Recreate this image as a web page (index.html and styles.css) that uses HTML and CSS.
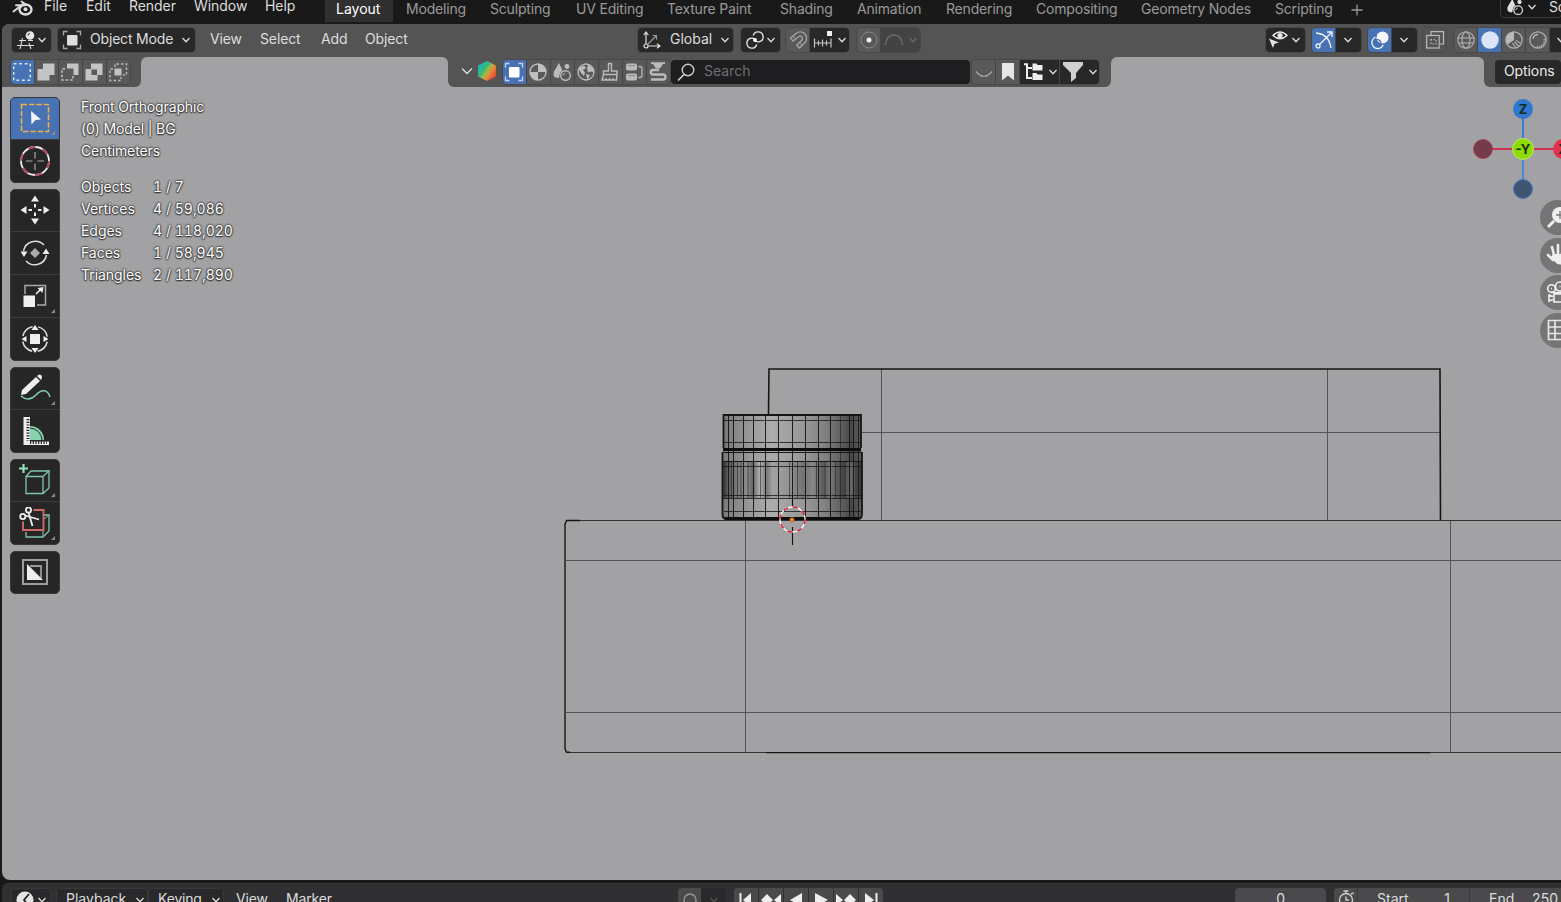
FILE: index.html
```html
<!DOCTYPE html>
<html lang="en">
<head>
<meta charset="utf-8">
<title>Blender</title>
<link rel="stylesheet" href="styles.css">
</head>
<body>
<svg class="defs" aria-hidden="true">
  <symbol id="chev" viewBox="0 0 8 6"><path d="M.5 1 4 4.800 7.500 1" fill="none" stroke="currentColor" stroke-width="1.300"/></symbol>
  <symbol id="scene" viewBox="0 0 20 20"><path d="M7 1 2 9.500Q0 15.500 6 16Q7.500 16 7.500 13Q8 9.500 10.500 8.500Z" fill="currentColor"/><circle cx="15" cy="4.500" r="2.400" fill="currentColor"/><circle cx="13.500" cy="13.500" r="4.800" fill="none" stroke="currentColor" stroke-width="1.400"/><path d="M11 13.500a2.500 2.500 0 0 1 2-2.300" fill="none" stroke="currentColor"/></symbol>
  <symbol id="objmode" viewBox="0 0 20 20"><path d="M1.500 5.500v-4h4M14.500 1.500h4v4M18.500 14.500v4h-4M5.500 18.500h-4v-4" fill="none" stroke="currentColor" opacity=".7" stroke-width="1.300"/><rect x="5" y="5" width="10.500" height="10.500" rx="1" fill="currentColor"/></symbol>
  <symbol id="corner" viewBox="0 0 4 4"><path d="M4 0v4H0z" fill="#8c8c8c"/></symbol>
</svg>

<header class="topbar">
  <svg class="logo" viewBox="0 0 22 17"><path d="M1.500 11.500 11 4M4 5.300h9M9.500 1.500l5 3.500" fill="none" stroke="#ddd" stroke-width="2" stroke-linecap="round"/><ellipse cx="13.500" cy="9.500" rx="6" ry="5" fill="none" stroke="#ddd" stroke-width="2.400"/><circle cx="13.500" cy="9.300" r="2" fill="#ddd"/></svg>
  <nav class="menus"><span>File</span><span>Edit</span><span>Render</span><span>Window</span><span>Help</span></nav>
  <nav class="tabs"><span class="tab on">Layout</span><span>Modeling</span><span>Sculpting</span><span>UV Editing</span><span>Texture Paint</span><span>Shading</span><span>Animation</span><span>Rendering</span><span>Compositing</span><span>Geometry Nodes</span><span>Scripting</span>
    <svg class="plus" viewBox="0 0 12 12"><path d="M6 .5v11M.5 6h11" stroke="#999" stroke-width="1.300"/></svg></nav>
  <div class="scenebox"><svg class="i18"><use href="#scene"/></svg><svg class="chev"><use href="#chev"/></svg><span>Scene</span></div>
</header>

<main class="viewport">
  <svg class="canvas" viewBox="2 24 1559 856">
    <defs>
      <linearGradient id="cap"><stop offset="0" stop-color="#777"/><stop offset=".2" stop-color="#999"/><stop offset=".35" stop-color="#acacac"/><stop offset=".6" stop-color="#969696"/><stop offset=".75" stop-color="#7e7e7e"/><stop offset=".93" stop-color="#484848"/><stop offset="1" stop-color="#5c5c5c"/></linearGradient>
      <linearGradient id="ribs"><stop offset="0" stop-color="#444"/><stop offset=".1" stop-color="#777"/><stop offset=".18" stop-color="#8a8a8a"/><stop offset=".22" stop-color="#666"/><stop offset=".27" stop-color="#b0b0b0"/><stop offset=".32" stop-color="#787878"/><stop offset=".36" stop-color="#a2a2a2"/><stop offset=".48" stop-color="#929292"/><stop offset=".58" stop-color="#737373"/><stop offset=".65" stop-color="#888"/><stop offset=".72" stop-color="#5c5c5c"/><stop offset=".78" stop-color="#777"/><stop offset=".86" stop-color="#454545"/><stop offset=".92" stop-color="#686868"/><stop offset="1" stop-color="#333"/></linearGradient>
    </defs>
    <g fill="none" stroke="#555558">
      <path d="M881.500 369.500V520M1327.500 369.500V520M862 432.500h578"/>
      <path d="M745.500 520V752M1450.500 520V752M566 560.500h995M566 712.500h995"/>
      <path d="M566 520.500h995M566 752.500h995" stroke="#333"/>
    </g>
    <g fill="none" stroke="#161616">
      <path d="M768.500 415l.5-46h671l.5 151" stroke-width="1.600"/>
      <path d="M580 520.500h-13.500l-1.500 4v224l1.500 3.800H570M766 752.600h664" stroke-width="1.400"/>
    </g>
    <rect x="723" y="415" width="138" height="35" fill="url(#cap)"/>
    <path d="M723.500 450h137.500l1 3v63q0 4-4 4H726q-4 0-4-4v-63z" fill="url(#cap)"/>
    <rect x="722" y="461" width="140" height="37" fill="url(#ribs)"/>
    <g fill="none" stroke="#161616">
      <path d="M728.500 415v102M733.500 415v103M743.500 415v103M753.500 415v103M765.500 415v103M778.500 415v103M792.500 415v93M805.500 415v103M818.500 415v103M830.500 415v103M849.500 415v103M853.500 415v103M858.500 415v102" stroke-width=".95"/>
      <path d="M840.500 415v103M725 462v36M731.500 462v36M737.500 462v36M741 462v36M748 462v36M760.500 462v36M789.500 462v36M797.500 462v36M816.500 462v36M825 462v36M835.500 462v36M845 462v36M856 462v36" stroke-width=".75" opacity=".7"/>
      <path d="M723 420.500h138M723 442.500h138M722 466.500h140M722 495.500h140M722 498.500h140M724 511.500h137" stroke-width=".8"/>
      <path d="M722 461.500h140M723.500 452.500h138" stroke-width="1.200"/>
      <path d="M723.500 448v-33h137.500v33M722.500 452v62q0 5 4 5h131q4.500 0 4.500-5v-62" stroke-width="1.800"/>
      <path d="M723 449.500h138" stroke="#0c0c0c" stroke-width="2.800"/>
      <path d="M725 518.500h134" stroke="#0c0c0c" stroke-width="2.800"/>
    </g>
    <path d="M792.500 496v12M792.500 527v18" stroke="#111" stroke-width="1.100"/>
    <circle cx="792.500" cy="519.500" r="12.500" fill="none" stroke="#fff" stroke-width="1.300"/>
    <circle cx="792.500" cy="519.500" r="12.500" fill="none" stroke="#e01b2e" stroke-width="1.400" stroke-dasharray="4.910 4.910"/>
    <circle cx="792" cy="519.800" r="2.300" fill="#f58220" stroke="#8a4a12" stroke-width=".4"/>
  </svg>

  <div class="row1">
    <div class="w editor"><svg class="i20" viewBox="0 0 20 20"><g fill="none" stroke="#ddd" stroke-width="1.100"><path d="M3 10.500h7M1 15.500h17M6.500 8 4 19M13 13l2 6M12 10.500h5"/></g><circle cx="14" cy="5.500" r="4.300" fill="#e6e6e6"/><path d="M12 5.500a2 2 0 0 1 2-2" stroke="#333" fill="none"/></svg><svg class="chev"><use href="#chev"/></svg></div>
    <div class="w mode"><svg class="i20"><use href="#objmode"/></svg><span>Object Mode</span><svg class="chev"><use href="#chev"/></svg></div>
    <nav class="vmenus"><span>View</span><span>Select</span><span>Add</span><span>Object</span></nav>
    <div class="mid">
      <div class="w orient"><svg class="i20" viewBox="0 0 20 20"><g fill="none" stroke="#e0e0e0" stroke-width="1.200"><path d="M4 14V2.500M1.700 5 4 2l2.300 3M6 16h11.500M15 13.700l3 2.300-3 2.300"/><circle cx="4" cy="16" r="2"/><path d="M5.500 14.500 14 6M10.500 5.500H14.500v4" stroke="#999"/></g></svg><span>Global</span><svg class="chev"><use href="#chev"/></svg></div>
      <div class="w pivot"><svg class="i20" viewBox="0 0 20 20"><g fill="none" stroke="#e0e0e0" stroke-width="1.400"><path d="M8.300 5.500A5 5 0 1 1 14 11.800"/><path d="M11.700 14.500A5 5 0 1 1 6 8.200M14 11.800q-3.500.3-5-2M6 8.200q3.500-.3 5 2"/></g><circle cx="10" cy="10" r="1.900" fill="#fff"/></svg><svg class="chev"><use href="#chev"/></svg></div>
      <div class="pair"><div class="b"><svg class="i20" viewBox="0 0 20 20"><path d="M2.500 8 8 3.500a6.300 6.300 0 0 1 8.500 9.500l-5 5-2.800-2.800 5-5a2.300 2.300 0 0 0-3.200-3.500L5 11z" fill="none" stroke="#a5a5a5" stroke-width="1.300"/><path d="m5 6 2.300 2.800M11.700 12.500l2.700 2.600" stroke="#a5a5a5"/></svg></div><div class="dk"><svg class="i20" viewBox="0 0 20 20"><path d="M1.500 8.500v9M18 8.500v9M1.500 13H18M5.500 10.500v5M9.500 9.500v7M13.500 10.500v5" stroke="#c5c5c5" fill="none" stroke-width="1.200"/><rect x="14" y="1" width="5" height="5" fill="#eee"/></svg><svg class="chev"><use href="#chev"/></svg></div></div>
      <div class="pair prop"><div class="b"><svg class="i20" viewBox="0 0 20 20"><circle cx="10" cy="10" r="8" fill="none" stroke="#858585"/><circle cx="10" cy="10" r="2.500" fill="#eee"/></svg></div><div class="dk off"><svg class="i20" viewBox="0 0 20 20"><path d="M1.500 15C2 1.500 18 1.500 18.500 15" fill="none" stroke="#777" stroke-width="1.200"/></svg><svg class="chev"><use href="#chev"/></svg></div></div>
    </div>
    <div class="right">
      <div class="w eye"><svg class="i20" viewBox="0 0 20 20"><path d="M5 5.500Q12 -1.500 19 5.500 12 12 5 5.500z" fill="none" stroke="#e5e5e5" stroke-width="1.500"/><circle cx="12" cy="5.500" r="2.600" fill="#e5e5e5"/><path d="m1 8.500 10 4-4.500 1.200L5 18z" fill="#e5e5e5"/></svg><svg class="chev"><use href="#chev"/></svg></div>
      <div class="pair giz"><div class="b blue"><svg class="i20" viewBox="0 0 20 20"><path d="M2 3q13 1 15 15M5.500 14.500l12-12M13 2h5v5" fill="none" stroke="#f2f5fb" stroke-width="1.300"/><circle cx="4" cy="16" r="2" fill="none" stroke="#f2f5fb" stroke-width="1.300"/></svg></div><div class="dk one"><svg class="chev"><use href="#chev"/></svg></div></div>
      <div class="pair ovl"><div class="b blue"><svg class="i20" viewBox="0 0 20 20"><circle cx="12.500" cy="7.500" r="6" fill="#f5f7fc"/><path d="M5.500 7a6 6 0 1 0 7.800 8" fill="none" stroke="#f5f7fc" stroke-width="1.300"/><path d="M6.700 9.500a4 4 0 0 1 4.300 4" fill="none" stroke="#4772b3" stroke-width="1.200"/></svg></div><div class="dk one"><svg class="chev"><use href="#chev"/></svg></div></div>
      <div class="b solo"><svg class="i20" viewBox="0 0 20 20"><g fill="none" stroke="#bbb" stroke-width="1.200"><path d="M6 5V1.700h12.500V14H15"/><rect x="1.700" y="5.500" width="12.500" height="12.500"/><path d="M6 9.500v4.500h5V9.500z" stroke-dasharray="1.500 1.500"/></g></svg></div>
      <div class="pair shade">
        <div class="b"><svg class="i20" viewBox="0 0 20 20"><g fill="none" stroke="#b5b5b5" stroke-width="1.100"><circle cx="10" cy="10" r="8.200"/><ellipse cx="10" cy="10" rx="4" ry="8"/><path d="M2 8h16M2.800 13h14.400"/></g></svg></div>
        <div class="b blue"><svg class="i20" viewBox="0 0 20 20"><circle cx="10" cy="10" r="8.700" fill="#dce5f5"/></svg></div>
        <div class="b"><svg class="i20" viewBox="0 0 20 20"><circle cx="10" cy="10" r="8.200" fill="none" stroke="#b0b0b0" stroke-width="1.200"/><path d="M10 10V2a8 8 0 0 0-8 8z M2 10a8 8 0 0 0 1.500 4.500L10 10z" fill="#b8b8b8"/><path d="M12 10.500l5 3M10.500 12l4.500 4.500M8.500 13l3.500 5" stroke="#aaa" stroke-width="1.300"/></svg></div>
        <div class="b"><svg class="i20" viewBox="0 0 20 20"><circle cx="10" cy="10" r="8.200" fill="none" stroke="#b0b0b0" stroke-width="1.200"/><path d="M5 9a5 5 0 0 1 5-4.500" fill="none" stroke="#bbb" stroke-width="1.400"/><path d="M16.500 9a6.500 6.500 0 0 1-8 7.700" fill="none" stroke="#aaa" stroke-width="2.400" stroke-dasharray="1.300 1"/></svg></div>
        <div class="dk one last"><svg class="chev"><use href="#chev"/></svg></div>
      </div>
    </div>
  </div>

  <div class="row2">
    <div class="seg s1"><div class="pair">
      <div class="b blue"><svg class="i20" viewBox="0 0 20 20"><rect x="1.700" y="1.700" width="16.600" height="16.600" fill="none" stroke="#dfe8f7" stroke-width="1.500" stroke-dasharray="2.770"/></svg></div>
      <div class="b"><svg class="i20" viewBox="0 0 20 20"><path d="M7 1.500h11.500V13H13.500v5.500H1.500V7H7z" fill="#c4c4c4"/></svg></div>
      <div class="b"><svg class="i20" viewBox="0 0 20 20"><path d="M7 1.500h11.500V13H13.500V6.500H7z" fill="#c4c4c4"/><path d="M5 6.700H2v11.300h11V14" fill="none" stroke="#c4c4c4" stroke-width="1.500" stroke-dasharray="2.500 2"/></svg></div>
      <div class="b"><svg class="i20" viewBox="0 0 20 20"><path fill-rule="evenodd" d="M7 1.500h11.500V13H13.500v5.500H1.500V7H7zM7.500 7.500v5.500H13V7.500z" fill="#c4c4c4"/></svg></div>
      <div class="b"><svg class="i20" viewBox="0 0 20 20"><path d="M7 5V2h11.500v11H15M5 7H2v11.500h11V15" fill="none" stroke="#bbb" stroke-width="1.400" stroke-dasharray="2.500 2"/><rect x="6.500" y="6.500" width="7" height="7" fill="#c4c4c4"/></svg></div>
    </div></div>
    <div class="gap g1"></div>
    <div class="seg s2">
      <svg class="c2" viewBox="0 0 12 8"><path d="m1 1.500 5 5 5-5" fill="none" stroke="#ddd" stroke-width="1.300"/></svg>
      <div class="hex"></div>
      <div class="pair filt">
        <div class="b blue"><svg class="i20"><use href="#objmode"/></svg></div>
        <div class="b"><svg class="i20" viewBox="0 0 20 20"><circle cx="10" cy="10" r="8" fill="none" stroke="#bbb" stroke-width="1.400"/><path d="M10 10V2a8 8 0 0 1 8 8zM10 10H2a8 8 0 0 0 8 8z" fill="#c0c0c0"/></svg></div>
        <div class="b"><svg class="i20"><use href="#scene"/></svg></div>
        <div class="b"><svg class="i20" viewBox="0 0 20 20"><circle cx="10" cy="10" r="8" fill="none" stroke="#bbb" stroke-width="1.300"/><path d="M2.500 7q2-3.500 6-3l1.500 2-3 2 2 2.500-1 3.500-3-3zM12 2.500l4.500 3 1.500 5-3-1-3 1-1-4zM10 12l4 1-2.500 5z" fill="#bbb"/></svg></div>
        <div class="b"><svg class="i20" viewBox="0 0 20 20"><path d="M8.500 1.500h3V9H17v3.500H3.500V9h5zM3.500 12.500 2 18h14.500l.5-5.500M6 18v-2M9.500 18v-2M13 18v-2" fill="none" stroke="#bbb" stroke-width="1.400"/></svg></div>
        <div class="b"><svg class="i20" viewBox="0 0 20 20"><rect x="2" y="1.500" width="11" height="7" rx="2" fill="#bbb"/><rect x="2" y="11.500" width="11" height="7" rx="2" fill="#bbb"/><path d="M4 3.700h7M4 13.700h7" stroke="#888"/><path d="M14.500 4.500h1.500q2 0 2 2v7q0 2-2 2h-1.500" fill="none" stroke="#bbb" stroke-width="1.300"/></svg></div>
        <div class="b"><svg class="i20" viewBox="0 0 20 20"><path d="M3 1.200h14" stroke="#bbb" stroke-width="1.800"/><path d="M5 2h10l-3 4.500H8z" fill="#bbb"/><path d="M11 8H5a2 2 0 0 0 0 4.500h10a2.500 2.500 0 0 1 0 5H3" fill="none" stroke="#bbb" stroke-width="2.300"/></svg></div>
      </div>
      <div class="search"><svg class="i20" viewBox="0 0 20 20"><circle cx="12" cy="8" r="5.800" fill="none" stroke="#ccc" stroke-width="1.400"/><path d="m8 12.500-6 6" stroke="#ccc" stroke-width="1.700"/></svg><span>Search</span></div>
      <div class="pair tail">
        <div class="b"><svg class="i20" viewBox="0 0 20 20"><path d="M2 9.500q8 9.500 16 0" fill="none" stroke="#aaa" stroke-width="1.200"/></svg></div>
        <div class="b"><svg class="i20" viewBox="0 0 20 20"><path d="M4 1h12v17.500l-6-5-6 5z" fill="#e6e6e6"/></svg></div>
        <div class="dk"><svg class="i20" viewBox="0 0 20 20"><path d="M1 2.200h3V16h5M4 6h5" fill="none" stroke="#eee" stroke-width="2"/><path d="M9.500 1.500h4l1 1.500h5v5.500h-10zM9.500 11h4l1 1.500h5V18h-10z" fill="#eee"/></svg><svg class="chev"><use href="#chev"/></svg></div>
        <div class="dk"><svg class="i20" viewBox="0 0 20 20"><path d="M0 0h20v3l-7 8v5l-5 4v-9L0 3z" fill="#d0d0d0"/></svg><svg class="chev"><use href="#chev"/></svg></div>
      </div>
    </div>
    <div class="gap g2"></div>
    <div class="seg s3"><div class="w options">Options</div></div>
  </div>

  <div class="stage">
    <aside class="tools">
      <div class="grp">
        <div class="tool on"><svg viewBox="0 0 32 32"><rect x="2.500" y="2.500" width="27" height="27" fill="none" stroke="#f0b04a" stroke-width="1.600" stroke-dasharray="5.500 1.900"/><path d="m12 9 10 8.500-5.500.5-4 4.500z" fill="#f2f5fb"/></svg><svg class="cr"><use href="#corner"/></svg></div>
        <div class="tool"><svg viewBox="0 0 32 32"><circle cx="16" cy="16" r="14" fill="none" stroke="#eee" stroke-width="1.800"/><circle cx="16" cy="16" r="14" fill="none" stroke="#b04a5e" stroke-width="1.900" stroke-dasharray="7.330"/><path d="M16 7v6.500M16 18.500V25M7 16h6.500M18.500 16H25" stroke="#aaa" stroke-width="1.200"/></svg></div>
      </div>
      <div class="grp">
        <div class="tool"><svg viewBox="0 0 32 32"><path d="m16 1.500 4 6h-8zM16 30.500l4-6h-8zM1.500 16l6-4v8zM30.500 16l-6-4v8z" fill="#eee"/><path d="M16 10v3.500M16 18.500V22M9.500 16H13M19 16h3.500" stroke="#eee" stroke-width="2"/></svg></div>
        <div class="tool"><svg viewBox="0 0 32 32"><path d="M4.500 14A12 12 0 0 1 25 8M27.500 18A12 12 0 0 1 7 24" fill="none" stroke="#ddd" stroke-width="1.500"/><path d="M1.500 14.500h7L5 20zM23.500 17h7L27 11.500z" fill="#eee"/><path d="m16 11 5 5-5 5-5-5z" fill="#aaa"/></svg></div>
        <div class="tool"><svg viewBox="0 0 32 32"><path d="M6 14V5.500h20.500V25H18" fill="none" stroke="#aaa" stroke-width="1.500"/><rect x="4.500" y="15.500" width="11.500" height="11.500" fill="#eee"/><path d="m17 14 5-5" stroke="#eee" stroke-width="1.600"/><path d="m18.500 8 6-1-1 6z" fill="#eee"/></svg><svg class="cr"><use href="#corner"/></svg></div>
        <div class="tool"><svg viewBox="0 0 32 32"><circle cx="16" cy="16" r="12.500" fill="none" stroke="#ddd" stroke-width="1.500" stroke-dasharray="14 5.635" stroke-dashoffset="-2.800"/><rect x="11" y="11" width="10" height="10" fill="#eee"/><path d="m16 2 3.500 5h-7zM16 30l3.500-5h-7zM2.500 16l5-3v6zM29.500 16l-5-3v6z" fill="#eee"/></svg></div>
      </div>
      <div class="grp">
        <div class="tool"><svg viewBox="0 0 32 32"><path d="M2 24c7 6 12 2 15-1 6-7 12-5 14 2" fill="none" stroke="#7fd0ae" stroke-width="1.500"/><path d="m2 23 1-5L17 5l4 4L7 22zM18 4l2-1.500q3 0 3 3L22 8z" fill="#eee"/></svg><svg class="cr"><use href="#corner"/></svg></div>
        <div class="tool"><svg viewBox="0 0 32 32"><path d="M11 25V11a14 14 0 0 1 14 14z" fill="#86d3af"/><path d="M11 13a12.500 12.500 0 0 1 12 12" fill="none" stroke="#262626"/><path d="M5 2h6v24.500h19V30H4.500V2z" fill="#eee"/><path d="M9 4v22" stroke="#262626" stroke-width="3" stroke-dasharray="1.200 1.500"/><path d="M11 27.500h17" stroke="#262626" stroke-width="3" stroke-dasharray="1.200 1.500"/></svg></div>
      </div>
      <div class="grp">
        <div class="tool"><svg viewBox="0 0 32 32"><path d="M7 12.500h17v17H7zM7 12.500l5-5.500h18L24 12.500M30 7v17l-6 5.500" fill="none" stroke="#7fc6a8" stroke-width="1.300"/><path d="M4.500 0v9M0 4.500h9" stroke="#8fe0bd" stroke-width="2.200"/></svg><svg class="cr"><use href="#corner"/></svg></div>
        <div class="tool"><svg viewBox="0 0 32 32"><path d="M7 25v5h17l6-6V8h-5" fill="none" stroke="#7fc6a8" stroke-width="1.300"/><path d="M24 23v6M25 12l5-4" stroke="#7fc6a8"/><path d="M14.500 3H24.500v20H4V14.500" fill="none" stroke="#cf6a6a" stroke-width="1.900"/><g fill="none" stroke="#eee" stroke-width="1.800"><circle cx="9.500" cy="3" r="2.600"/><circle cx="3.800" cy="9.500" r="2.600"/><path d="m9.500 5.500 4 13.500M6 8.500l14 4"/></g></svg><svg class="cr"><use href="#corner"/></svg></div>
      </div>
      <div class="grp">
        <div class="tool"><svg viewBox="0 0 32 32"><rect x="4" y="4" width="24" height="24" fill="none" stroke="#aaa" stroke-width="1.800"/><path d="M11 10h11v12" fill="none" stroke="#999" stroke-width="1.800"/><path d="M8 8v16h16z" fill="#eee"/></svg></div>
      </div>
    </aside>
    <section class="info">
      <p>Front Orthographic</p><p>(0) Model | BG</p><p>Centimeters</p>
      <dl><dt>Objects</dt><dd>1 / 7</dd><dt>Vertices</dt><dd>4 / 59,086</dd><dt>Edges</dt><dd>4 / 118,020</dd><dt>Faces</dt><dd>1 / 58,945</dd><dt>Triangles</dt><dd>2 / 117,890</dd></dl>
    </section>
    <aside class="nav">
      <svg class="axes" viewBox="0 0 90 102"><g stroke-width="2"><path d="M50 11v29" stroke="#3a7dd0"/><path d="M50 61v30" stroke="#4a88d8"/><path d="M10 51h30M60 51h30" stroke="#d0314e"/></g><circle cx="50" cy="11" r="10" fill="#2f78d0"/><circle cx="10" cy="51" r="9.400" fill="#733c49" stroke="#a83950"/><circle cx="50" cy="91" r="9.400" fill="#405570" stroke="#3c76bd"/><circle cx="50" cy="51" r="10.400" fill="#8cdc00" stroke="#b6ee58"/><circle cx="90" cy="51" r="10" fill="#e2304f"/><g class="axt"><text x="50" y="15.500">Z</text><text x="50" y="55.500">-Y</text><text x="90" y="55.500">X</text></g></svg>
      <div class="round"><svg viewBox="0 0 24 24"><circle cx="14" cy="9" r="8" fill="#eee"/><path d="m8 15-6 6" stroke="#eee" stroke-width="3"/><path d="M14 5v8M10 9h8" stroke="#777" stroke-width="1.300"/></svg></div>
      <div class="round"><svg viewBox="0 0 24 24"><path d="M8 12 6 4M12 11V2M16 11l1-8M19 13l2-7M7 17l-5-5" stroke="#eee" stroke-width="2.600" stroke-linecap="round"/><path d="M7 11h13l-1 8q-5 5-10 0l-4-5z" fill="#eee"/></svg></div>
      <div class="round"><svg viewBox="0 0 24 24"><g fill="none" stroke="#eee" stroke-width="1.600"><circle cx="5.500" cy="7.500" r="3.800"/><circle cx="14" cy="5.500" r="4.500"/><path d="M5 11.500h14M8 13h13v8H8zM7 15.500l-4-1.500v6l4-1.500"/></g><path d="M5 7.500h1M13.500 5.500h1" stroke="#eee" stroke-width="1.500"/></svg></div>
      <div class="round"><svg viewBox="0 0 24 24"><path d="M2.500 2.500h20v19h-20zM2.500 9h20M2.500 15.500h20M9 2.500v19M16 2.500v19" fill="none" stroke="#e5e5e5" stroke-width="1.700"/></svg></div>
    </aside>
  </div>
</main>

<footer class="timeline">
  <div class="tl clock"><svg class="i18" viewBox="0 0 18 18"><circle cx="9" cy="9" r="8.500" fill="#e5e5e5"/><path d="m13 3-5 6 4 5" fill="none" stroke="#222" stroke-width="1.800"/></svg><svg class="chev"><use href="#chev"/></svg></div>
  <div class="tl play"><span>Playback</span><svg class="chev"><use href="#chev"/></svg></div>
  <div class="tl key"><span>Keying</span><svg class="chev"><use href="#chev"/></svg></div>
  <span class="tv">View</span><span class="tm">Marker</span>
  <div class="auto"><div class="b"><svg class="i18" viewBox="0 0 18 18"><circle cx="9" cy="9" r="6" fill="none" stroke="#999" stroke-width="1.300"/></svg></div><div class="ad"><svg class="chev"><use href="#chev"/></svg></div></div>
  <div class="transport">
    <div><svg viewBox="0 0 20 16"><path d="M4.500 1v14" stroke="#eee" stroke-width="2"/><path d="M15 1v14L7 8z" fill="#eee"/></svg></div>
    <div><svg viewBox="0 0 20 16"><path d="m6 2 6 6-6 6-6-6zM20 2v12l-7-6z" fill="#eee"/></svg></div>
    <div><svg viewBox="0 0 20 16"><path d="M16 1v14L4 8z" fill="#eee"/></svg></div>
    <div><svg viewBox="0 0 20 16"><path d="M4 1v14l13-7z" fill="#eee"/></svg></div>
    <div><svg viewBox="0 0 20 16"><path d="m14 2 6 6-6 6-6-6zM0 2v12l7-6z" fill="#eee"/></svg></div>
    <div><svg viewBox="0 0 20 16"><path d="M15.500 1v14" stroke="#eee" stroke-width="2"/><path d="M4 1v14l9-7z" fill="#eee"/></svg></div>
  </div>
  <div class="frame">0</div>
  <div class="range"><div class="watch"><svg class="i18" viewBox="0 0 18 18"><g fill="none" stroke="#ccc" stroke-width="1.400"><circle cx="9" cy="10" r="6.500"/><path d="M6.500 1h5M9 1v2.500M14 4l2.500-1M9 6.500V10h3"/></g></svg></div><div class="start"><span>Start</span><span>1</span></div><div class="end"><span>End</span><span>250</span></div></div>
</footer>
</body>
</html>
```
FILE: styles.css
```css
* { box-sizing: border-box; }
body { margin: 0; width: 1561px; height: 902px; overflow: hidden; background: #181818; color: #ddd; font: 14px/20px Inter, "Noto Sans", sans-serif; letter-spacing: -.18px; display: flex; flex-direction: column; white-space: nowrap; }
svg { display: block; flex: none; }
.defs { position: absolute; width: 0; height: 0; }
.i20 { width: 20px; height: 20px; }
.i18 { width: 18px; height: 18px; }
.chev { width: 8px; height: 6px; }

.topbar { height: 24px; flex: none; display: flex; align-items: flex-start; background: #191919; }
.logo { width: 22px; height: 17px; margin: 0 10px 0 12px; }
.menus { display: grid; grid-template-columns: 42px 43px 65px 71px 60px; margin-top: -4px; letter-spacing: -.05px; }
.tabs { display: grid; grid-template-columns: 81px 84px 86px 91px 113px 77px 89px 90px 105px 134px 76px 12px; line-height: 18px; color: #999; padding-right: 137px; }
.tab.on { background: #303030; color: #fff; width: 68px; padding-left: 11px; height: 22px; letter-spacing: 0; }
.plus { width: 12px; height: 12px; margin-top: 4px; }
.scenebox { margin-top: -4px; width: 62px; height: 22px; border: 1px solid #3b3b3b; border-radius: 4px; display: flex; align-items: center; flex: none; gap: 4px; padding-left: 5px; overflow: hidden; }
.scenebox span { margin-left: 9px; }

.viewport { position: relative; height: 856px; width: 1559px; margin-left: 2px; flex: none; overflow: hidden; background: #a2a2a4; border-radius: 8px 0 0 8px; display: flex; flex-direction: column; }
.canvas { position: absolute; inset: 0; width: 1559px; height: 856px; }
.row1, .row2, .stage { position: relative; }
.row1 { height: 33px; background: #545454; display: flex; padding: 4px 0 0 10px; }
.row1 > *, .mid > *, .right > *, .pair > * { flex: none; }
.w, .dk { background: #282828; display: flex; align-items: center; }
.w { height: 24px; border-radius: 4px; }
.row1 .w, .pair, .solo { box-shadow: 0 0 0 1px #494949; }
.editor { width: 39px; padding-left: 4px; gap: 2px; }
.mode { width: 137px; margin-left: 7px; padding: 0 5px 0 4px; }
.mode span { margin: 0 9px 0 8px; flex: 1; line-height: 22px; padding-bottom: 2px; letter-spacing: -.18px; }
.vmenus { display: grid; grid-template-columns: 50px 61px 44px 60px; margin-left: 15px; line-height: 22px; letter-spacing: -.12px; }
.mid { display: flex; margin-left: 213px; }
.orient { width: 95px; padding: 0 4px; }
.orient span { flex: 1; margin-left: 8px; padding-bottom: 2px; letter-spacing: 0; }
.pivot { width: 39px; margin-left: 8px; padding-left: 4px; gap: 2px; }
.pair { display: flex; height: 24px; border-radius: 4px; overflow: hidden; gap: 1px; background: #454545; }
.mid .pair { margin-left: 6px; }
.mid .prop { margin-left: 8px; }
.b { width: 23px; height: 24px; background: #595959; display: flex; align-items: center; justify-content: center; color: #bbb; }
.blue { background: #4772b3; color: #fff; }
.dk { height: 24px; width: 39px; padding-left: 3px; gap: 5px; }
.off { background: #434343; color: #666; }
.right { display: flex; margin-left: 346px; }
.eye { width: 39px; padding-left: 2px; gap: 4px; }
.right .pair { margin-left: 7px; }
.dk.one { width: 25px; padding-left: 8px; }
.right .solo { margin-left: 6px; border-radius: 4px; background: #545454; }
.right .shade { margin-left: 8px; }
.dk.last { width: 20px; padding-left: 7px; }

.row2 { height: 30px; display: flex; }
.seg { background: #545454; border-radius: 0 0 6px 6px; padding-top: 3px; display: flex; flex: none; }
.s1 { width: 139px; padding-left: 9px; border-bottom-left-radius: 0; }
.s2 { width: 663px; }
.s3 { width: 77px; padding-left: 11px; border-bottom-right-radius: 0; }
.row2 .i20 { margin: -1px 0 0 -1px; }
.row2 .chev { margin-left: 1px; }
.s1 .b, .filt .b { justify-content: flex-start; padding-left: 2px; }
.gap { flex: none; background: linear-gradient(#545454 7px, transparent 7px); }
.gap::before { content: ""; display: block; height: 30px; background: #a2a2a4; border-radius: 6px 6px 0 0; }
.g1 { width: 307px; }
.g2 { width: 373px; }
.c2 { width: 12px; height: 8px; margin: 7px 0 0 13px; }
.hex { width: 18px; height: 20px; margin: 1px 7px 0 5px; clip-path: polygon(50% 0, 100% 22%, 100% 78%, 50% 100%, 0 78%, 0 22%); background: linear-gradient(125deg, #1cb5c3 12%, #35b878 38%, #9cbb45 50%, #e0903c 62%, #e64a30 85%); }
.search { width: 299px; height: 24px; margin-left: 1px; background: #1e1d20; border-radius: 4px; display: flex; align-items: center; padding-left: 6px; color: #707070; gap: 8px; }
.search span { padding-bottom: 2px; letter-spacing: 0; }
.tail { margin-left: 2px; }
.tail .b .i20 { margin-left: 1px; }
.tail .dk { padding-left: 4px; }
.options { width: 80px; padding: 0 0 2px 9px; color: #e8e8e8; letter-spacing: -.1px; }

.stage { display: flex; flex: 1; padding: 10px 0 0 8px; }
.tools { display: flex; flex-direction: column; gap: 6px; width: 50px; flex: none; }
.grp { background: #262626; border: 1px solid #383838; border-radius: 5px; overflow: hidden; }
.tool { height: 43px; position: relative; display: flex; justify-content: center; align-items: center; border-top: 1px solid #3d3d3d; padding-bottom: 1px; }
.tool:first-child { height: 41px; border-top: 0; padding-bottom: 1px; }
.tool > svg:first-child { width: 32px; height: 32px; }
.tool.on { background: #4772b3; }
.tool .cr { position: absolute; right: 4px; bottom: 4px; width: 4px; height: 4px; }
.info { margin-left: 21px; width: 240px; flex: none; line-height: 22px; margin-top: -1px; color: #fff; letter-spacing: -.13px; text-shadow: 0 0 2px #333, 0 0 2px #333, 0 0 2px #444, 0 1px 1px #444; }
.info p { margin: 0; }
.info dl { margin: 14px 0 0; display: grid; grid-template-columns: 72px 1fr; }
.info dt { letter-spacing: -.05px; }
.info dd { margin: 0; font-variant-numeric: tabular-nums; letter-spacing: -.05px; word-spacing: .2px; }
.nav { margin-left: 1152px; flex: none; width: 90px; }
.axes { width: 90px; height: 102px; margin-top: 1px; }
.axt { font: bold 13px Inter, sans-serif; text-anchor: middle; letter-spacing: 0; fill: #192a20; }
.round { width: 35px; height: 35px; margin: 2.500px 0 0 67px; border-radius: 50%; background: #757577; display: flex; align-items: center; justify-content: center; }
.axes + .round { margin-top: 0; }
.round svg { width: 24px; height: 24px; }

.timeline { margin-top: 3px; margin-left: 2px; height: 19px; width: 1559px; flex: none; background: #303033; border-top: 1px solid #3a3a3d; border-radius: 6px 0 0 0; display: flex; padding: 4px 0 0 9px; overflow: hidden; }
.timeline > * { flex: none; height: 24px; }
.tl { display: flex; align-items: center; background: #29292b; border-radius: 4px; border: 1px solid #38383b; }
.tl span { padding-bottom: 2px; }
.clock { width: 40px; padding-left: 4px; gap: 4px; }
.play { width: 92px; margin-left: 5px; padding: 0 3px 0 9px; justify-content: space-between; letter-spacing: 0; }
.key { width: 76px; padding: 0 3px 0 9px; justify-content: space-between; }
.tv { margin-left: 12px; width: 50px; line-height: 21px; }
.tm { width: 60px; line-height: 21px; }
.auto { display: flex; margin-left: 332px; border-radius: 4px; overflow: hidden; }
.auto .b, .transport div, .frame, .range { background: #4a4a4d; }
.ad { width: 25px; background: #29292b; display: flex; align-items: center; justify-content: center; color: #555; }
.transport { display: flex; gap: 1px; margin-left: 8px; border-radius: 4px; overflow: hidden; }
.transport div { width: 24px; height: 24px; display: flex; align-items: center; justify-content: center; }
.transport svg { width: 20px; height: 16px; }
.frame { width: 91px; margin-left: 352px; border-radius: 4px; text-align: center; line-height: 21px; }
.range { display: flex; margin-left: 8px; border-radius: 4px; line-height: 21px; letter-spacing: 0; }
.watch { width: 24px; padding: 2px 3px; border-right: 1px solid #39393b; }
.start, .end { display: flex; justify-content: space-between; width: 112px; padding: 0 19px; border-right: 1px solid #39393b; }
.end { padding-right: 23px; }
```
